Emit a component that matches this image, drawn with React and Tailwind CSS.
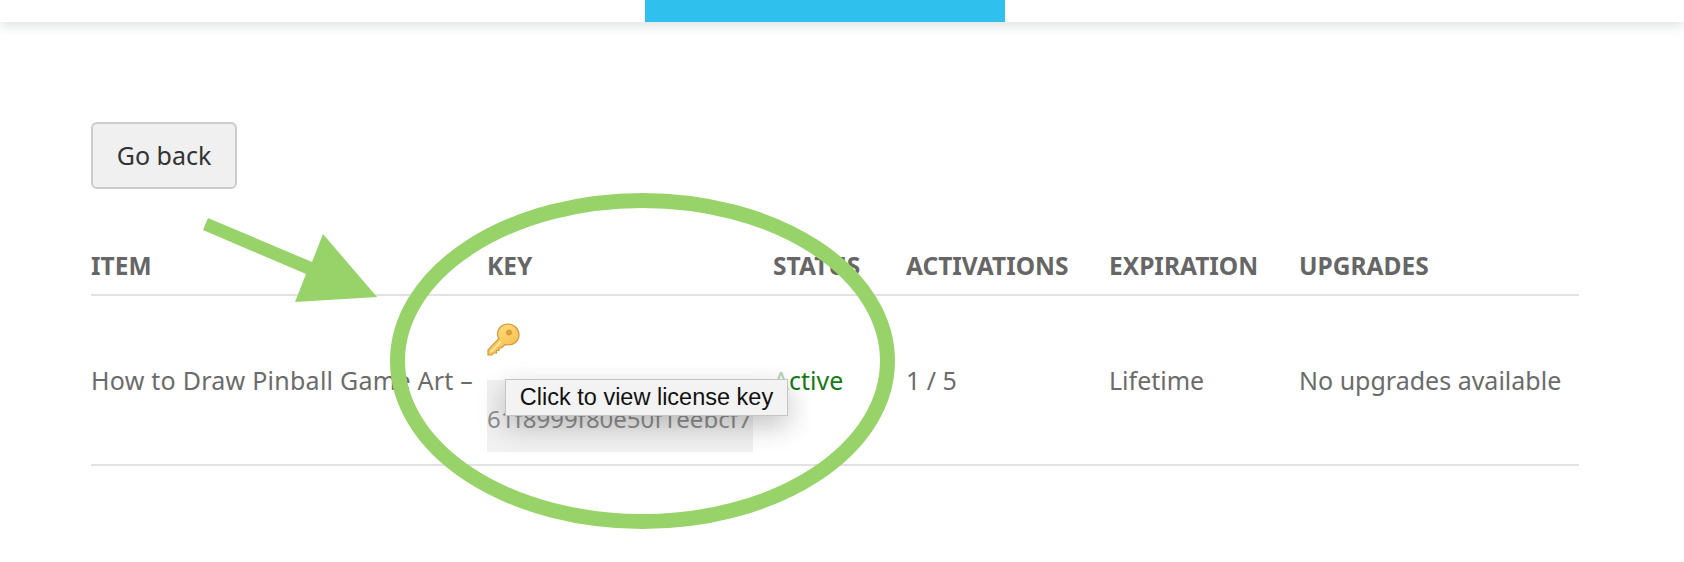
import React from 'react'

const columns = [
	{ label: 'ITEM', width: 'w-[396px]' },
	{ label: 'KEY', width: 'w-[286px]' },
	{ label: 'STATUS', width: 'w-[133px]' },
	{ label: 'ACTIVATIONS', width: 'w-[203px]' },
	{ label: 'EXPIRATION', width: 'w-[190px]' },
	{ label: 'UPGRADES', width: 'w-[280px]' },
]

function KeyIcon() {
	return (
		<svg width="33" height="33" viewBox="0 0 33 33" className="block">
			<defs>
				<linearGradient id="keyGold" x1="0.2" y1="0" x2="0.8" y2="1">
					<stop offset="0" stopColor="#fde07e" />
					<stop offset="1" stopColor="#f4b94a" />
				</linearGradient>
			</defs>
			<path
				d="M21 1 C27 1 32 6 32 12 C32 18 27 22 21 22 C20 22 19 22 18 21.5 L14.5 25 L12 25 L12 27.5 L9.5 27.5 L9.5 30 L6.5 30 L5 32 L1 32 L1 27 L12 15.5 C11 14.5 10.5 13 10.5 11.5 C10.5 5.5 15 1 21 1 Z"
				fill="url(#keyGold)"
				stroke="#d8963a"
				strokeWidth="1.2"
			/>
			<circle cx="22" cy="9.5" r="2.6" fill="#e2a03c" stroke="#c98a2c" strokeWidth="0.6" />
			<path d="M4 29 L14 18.5" stroke="#fdeaa8" strokeWidth="1.5" fill="none" />
		</svg>
	)
}

function Annotations() {
	return (
		<svg width="1684" height="562" viewBox="0 0 1684 562" className="absolute left-0 top-0 pointer-events-none">
			<polygon
				points="203,230 208,218 312,262 323,234 377,297 295,302 306,274"
				fill="#98d369"
			/>
			<ellipse cx="642.5" cy="361" rx="245" ry="160.5" fill="none" stroke="#98d369" strokeWidth="15" />
		</svg>
	)
}

export default function App() {
	return (
		<div className="relative h-[562px] w-full overflow-hidden bg-white font-['Noto_Sans',sans-serif] text-[#6b6b6b]">
			<header className="h-[22px] bg-white shadow-[0_3px_12px_rgba(60,70,90,0.18)]">
				<div className="ml-[645px] h-full w-[360px] bg-[#30c0ee]" />
			</header>

			<main className="pl-[91px] pt-[100px]">
				<button className="h-[67px] w-[146px] rounded-[6px] border-2 border-[#ccc] bg-[#f0f0f0] text-[25px] text-[#333]">
					Go back
				</button>

				<table className="mt-[55px] w-[1488px] table-fixed border-collapse text-left">
					<thead>
						<tr className="h-[51px] border-b-2 border-[#e2e2e2]">
							{columns.map(col => (
								<th key={col.label} className={`${col.width} pb-[6px] text-[24.5px] font-bold text-[#666]`}>
									{col.label}
								</th>
							))}
						</tr>
					</thead>
					<tbody>
						<tr className="h-[170px] border-b-2 border-[#e2e2e2] text-[25px]">
							<td className="whitespace-nowrap pt-[2px] tracking-[0.25px]">How to Draw Pinball Game Art –</td>
							<td className="pt-[14px]">
								<KeyIcon />
								<div className="mt-[24px] flex h-[72px] w-[266px] items-center whitespace-nowrap bg-[#f1f1f1] pt-[6px] text-[24px] text-[#8f8f8f]">
									61f8999f80e50f1eebcf7
								</div>
							</td>
							<td className="pt-[2px] text-[#167a16]">
								<span className="text-[#b4d4b4]">A</span>ctive
							</td>
							<td className="pt-[2px]">1 / 5</td>
							<td className="pt-[2px]">Lifetime</td>
							<td className="whitespace-nowrap pt-[2px]">No upgrades available</td>
						</tr>
					</tbody>
				</table>
			</main>

			<Annotations />

			<div className="absolute left-[505px] top-[379px] flex h-[37px] w-[283px] items-center justify-center border border-[#c4c4c4] bg-[#f3f3f3] pt-[1px] font-['Liberation_Sans',sans-serif] text-[23.5px] text-[#111] shadow-[0_10px_28px_rgba(0,0,0,0.24)]">
				Click to view license key
			</div>
		</div>
	)
}
